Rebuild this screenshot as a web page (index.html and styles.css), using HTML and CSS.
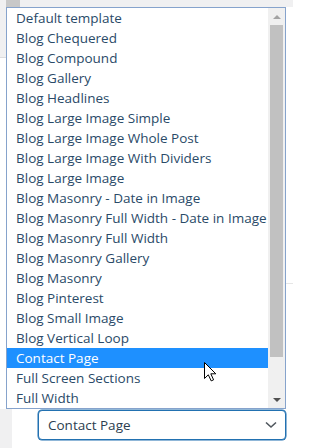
FILE: index.html
```html
<!DOCTYPE html>
<html>
<head>
<meta charset="utf-8">
<link rel="stylesheet" href="styles.css">
</head>
<body>
<div class="screen">
  <div class="topbar"><div class="nub"></div></div>
  <div class="main">
    <div class="gutter-left"><div class="gutter-top"></div></div>
    <div class="listbox">
      <ul class="options">
        <li>Default template</li>
        <li>Blog Chequered</li>
        <li>Blog Compound</li>
        <li>Blog Gallery</li>
        <li>Blog Headlines</li>
        <li>Blog Large Image Simple</li>
        <li>Blog Large Image Whole Post</li>
        <li>Blog Large Image With Dividers</li>
        <li>Blog Large Image</li>
        <li>Blog Masonry - Date in Image</li>
        <li>Blog Masonry Full Width - Date in Image</li>
        <li>Blog Masonry Full Width</li>
        <li>Blog Masonry Gallery</li>
        <li>Blog Masonry</li>
        <li>Blog Pinterest</li>
        <li>Blog Small Image</li>
        <li>Blog Vertical Loop</li>
        <li class="selected">Contact Page</li>
        <li>Full Screen Sections</li>
        <li>Full Width</li>
      </ul>
      <div class="scrollbar">
        <div class="arrow up"></div>
        <div class="track"><div class="thumb"></div></div>
        <div class="arrow down"></div>
      </div>
    </div>
    <div class="gutter-right"><div class="gutter-line"></div></div>
  </div>
  <div class="bottom">
    <div class="bottom-strip"></div>
    <div class="select">
      <span class="select-value">Contact Page</span>
      <svg class="chevron" width="12" height="8" viewBox="0 0 12 8"><path d="M1 1.5 L6 6 L11 1.5" fill="none" stroke="#50575e" stroke-width="1.6"/></svg>
    </div>
  </div>
  <svg class="cursor" width="13" height="20" viewBox="0 0 13 20"><path d="M0.5 0.5 L0.5 16.5 L4.3 12.8 L7.2 18.9 L9.6 17.8 L6.8 11.8 L11.8 11.8 Z" fill="#fff" stroke="#000" stroke-width="1" stroke-linejoin="round"/></svg>
</div>
</body>
</html>
```

FILE: styles.css
```css
html, body {
  margin: 0;
  padding: 0;
}
body {
  width: 293px;
  height: 448px;
  overflow: hidden;
  background: #ffffff;
  font-family: "Open Sans", "Noto Sans", sans-serif;
}
.screen {
  position: relative;
  width: 293px;
  height: 448px;
}
.topbar {
  height: 7px;
  background: #f0f0f1;
  display: flex;
}
.nub {
  margin-left: 6px;
  width: 14px;
  height: 7px;
  background: #c8c8c8;
}
.main {
  display: flex;
  height: 402px;
}
.gutter-left {
  width: 6px;
  background: #ffffff;
}
.gutter-top {
  height: 50px;
  background: #f0f0f1;
  border-bottom: 1px solid #dcdcde;
}
.listbox {
  box-sizing: border-box;
  width: 280px;
  height: 402px;
  border: 1px solid #86a3cc;
  background: #ffffff;
  display: flex;
}
.options {
  list-style: none;
  margin: 0;
  padding: 0;
  flex: 1;
}
.options li {
  height: 20px;
  line-height: 20px;
  padding-left: 9px;
  font-size: 13.5px;
  color: #2a4a68;
  white-space: nowrap;
  overflow: hidden;
}
.options li.selected {
  background: #1e90ff;
  color: #ffffff;
}
.scrollbar {
  width: 17px;
  background: #f0f0f0;
  display: flex;
  flex-direction: column;
}
.arrow {
  height: 17px;
  display: flex;
  align-items: center;
  justify-content: center;
}
.arrow::before {
  content: "";
  width: 0;
  height: 0;
  border-left: 4px solid transparent;
  border-right: 4px solid transparent;
}
.arrow.up::before {
  border-bottom: 4px solid #a3a3a3;
}
.arrow.down::before {
  border-top: 4px solid #505050;
}
.track {
  flex: 1;
  padding: 0 2px;
}
.thumb {
  height: 332px;
  background: #c1c1c1;
}
.gutter-right {
  flex: 1;
  background: #ffffff;
}
.gutter-line {
  margin-top: 276px;
  height: 1px;
  background: #e6e6e6;
}
.bottom {
  display: flex;
  height: 39px;
  padding-top: 1px;
  box-sizing: border-box;
}
.bottom-strip {
  width: 12px;
  background: #f0f0f1;
  margin-top: -1px;
}
.select {
  box-sizing: border-box;
  margin-left: 26px;
  width: 248px;
  height: 30px;
  border: 1px solid #2271b1;
  border-radius: 4px;
  box-shadow: 0 0 0 0.5px #2271b1;
  display: flex;
  align-items: center;
  justify-content: space-between;
  padding: 0 8px 0 9px;
  background: #fff;
}
.select-value {
  font-size: 13.5px;
  color: #2c3e50;
}
.chevron {
  display: block;
}
.cursor {
  position: absolute;
  left: 204px;
  top: 362px;
}
```
